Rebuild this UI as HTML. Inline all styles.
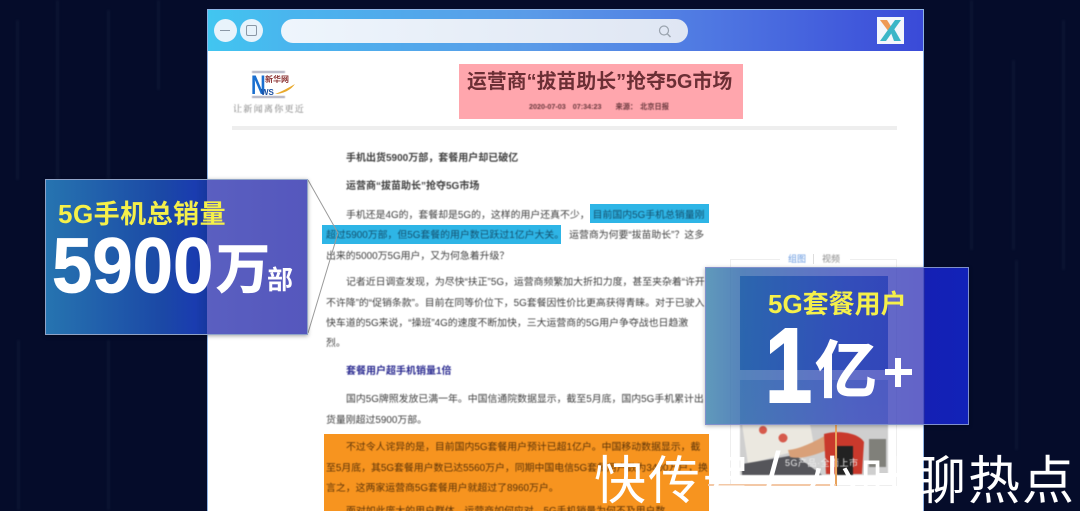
<!DOCTYPE html>
<html lang="zh"><head><meta charset="utf-8">
<style>
html,body{margin:0;padding:0;background:#050c2a}
#p{position:relative;width:1080px;height:511px;overflow:hidden;background:#050c2a;font-family:"Liberation Sans","Noto Sans CJK SC",sans-serif}
#p div{position:absolute}
.m{width:3px;background:rgba(120,140,170,.07);filter:blur(1.2px)}
.t{white-space:nowrap;font-size:9.9px;line-height:14px;color:#404040;filter:blur(.4px)}
.b{font-weight:700}
.h{font-size:10px}
.c{top:449px;font-size:52px;line-height:66px;color:#fff;white-space:nowrap;z-index:5;letter-spacing:2px}
.s{-webkit-text-stroke:.8px #fff}
</style></head><body><div id="p">
<div class="m" style="left:16px;top:20px;height:160px"></div>
<div class="m" style="left:56px;top:0;height:180px"></div>
<div class="m" style="left:107px;top:10px;height:170px"></div>
<div class="m" style="left:157px;top:0;height:90px"></div>
<div class="m" style="left:17px;top:340px;height:170px"></div>
<div class="m" style="left:107px;top:340px;height:170px"></div>
<div class="m" style="left:970px;top:0;height:250px"></div>
<div class="m" style="left:1012px;top:60px;height:190px"></div>
<div class="m" style="left:1062px;top:20px;height:250px"></div>
<div class="m" style="left:1015px;top:260px;height:190px"></div>

<div style="left:207px;top:9px;width:717px;height:502px;background:#fff;box-sizing:border-box;border:1px solid #8fb4e6;border-bottom:0"></div>
<div style="left:208px;top:10px;width:715px;height:41px;background:linear-gradient(90deg,#41c6f0 0%,#4ab4ee 12%,#5a9be8 45%,#4f78e2 70%,#3a4ad8 100%)"></div>
<div style="left:214px;top:19px;width:23px;height:23px;border-radius:50%;background:#e8f3fb"></div>
<div style="left:220px;top:30px;width:10px;height:1px;background:#8a97a5"></div>
<div style="left:240px;top:19px;width:23px;height:23px;border-radius:50%;background:#e8f3fb"></div>
<div style="left:246px;top:25px;width:9px;height:9px;border:1px solid #8a97a5;border-radius:2px"></div>
<div style="left:281px;top:19px;width:407px;height:24px;border-radius:12px;background:linear-gradient(90deg,#eef5fc,#dfe6f3)"></div>
<svg style="position:absolute;left:657px;top:24px" width="16" height="15" viewBox="0 0 16 15"><circle cx="7" cy="6.5" r="4.5" fill="none" stroke="#9aa3ae" stroke-width="1.2"/><path d="M10.5 10l3 3" stroke="#9aa3ae" stroke-width="1.4"/></svg>
<svg style="position:absolute;left:877px;top:17px" width="27" height="27" viewBox="0 0 27 27"><rect width="27" height="27" fill="#f4f6fb"/><path d="M3 3h7l5 8-3 4z" fill="#ee9a55"/><path d="M24 3h-6L3 24h6z" fill="#3bb6c8"/><path d="M13 13l3-3 8 14h-7z" fill="#3bb6c8"/></svg>

<!-- logo -->
<div style="left:252px;top:71px;width:33px;height:2px;background:#aab;filter:blur(.6px)"></div>
<div class="b" style="left:251px;top:73px;font-size:27px;line-height:24px;color:#1a6fd0;transform:scaleX(.75);transform-origin:0 0">N</div>
<div class="b" style="left:265px;top:74px;font-size:8px;line-height:12px;color:#8a3030;white-space:nowrap">新华网</div>
<div class="b" style="left:261px;top:88px;font-size:8px;line-height:9px;color:#1a4ea0">WS</div>
<svg style="position:absolute;left:274px;top:82px" width="22" height="14"><path d="M1 12C7 10 14 6 21 2 17 8 9 12 1 12z" fill="#e8a92c"/></svg>
<div style="left:252px;top:96px;width:33px;height:2px;background:#aab;filter:blur(.6px)"></div>
<div class="t" style="left:233px;top:102px;font-size:9px;letter-spacing:1.3px;color:#777;font-family:'Noto Serif CJK SC',serif">让新闻离你更近</div>

<div style="left:459px;top:64px;width:284px;height:55px;background:#ffa6ad"></div>
<div class="b" style="left:467px;top:69px;font-size:19.9px;line-height:26px;color:#6b2f35;white-space:nowrap;filter:blur(.35px)">运营商“拔苗助长”抢夺5G市场</div>
<div class="t b" style="left:529px;top:100px;font-size:7.2px;line-height:14px;color:#6b3a3f;word-spacing:5px">2020-07-03 07:34:23<span style="margin-left:14px">来源：</span><span style="margin-left:3px">北京日报</span></div>
<div style="left:232px;top:126px;width:665px;height:4px;background:#eeeeee"></div>

<div class="t b h" style="left:346px;top:150px;transform:translateY(2px)">手机出货5900万部，套餐用户却已破亿</div>
<div class="t b h" style="left:346px;top:180px">运营商“拔苗助长”抢夺5G市场</div>

<div style="left:590px;top:204px;width:119px;height:19px;background:#2eb5e6"></div>
<div style="left:322px;top:225px;width:239px;height:19px;background:#2eb5e6"></div>
<div class="t" style="left:346px;top:209px">手机还是4G的，套餐却是5G的，这样的用户还真不少，<span style="color:#14506e;margin-left:3px">目前国内5G手机总销量刚</span></div>
<div class="t" style="left:326px;top:229px"><span style="color:#14506e">超过5900万部，但5G套餐的用户数已跃过1亿户大关。</span><span style="margin-left:5px">运营商为何要“拔苗助长”？这多</span></div>
<div class="t" style="left:326px;top:250px">出来的5000万5G用户，又为何急着升级？</div>
<div class="t" style="left:346px;top:276px">记者近日调查发现，为尽快“扶正”5G，运营商频繁加大折扣力度，甚至夹杂着“许开</div>
<div class="t" style="left:326px;top:297px">不许降”的“促销条款”。目前在同等价位下，5G套餐因性价比更高获得青睐。对于已驶入</div>
<div class="t" style="left:326px;top:317px">快车道的5G来说，“操班”4G的速度不断加快，三大运营商的5G用户争夺战也日趋激</div>
<div class="t" style="left:326px;top:337px">烈。</div>
<div class="t b h" style="left:346px;top:365px;color:#2a2a90">套餐用户超手机销量1倍</div>
<div class="t" style="left:346px;top:393px">国内5G牌照发放已满一年。中国信通院数据显示，截至5月底，国内5G手机累计出</div>
<div class="t" style="left:326px;top:414px">货量刚超过5900万部。</div>

<div style="left:324px;top:434px;width:385px;height:77px;background:#f7941f"></div>
<div class="t" style="left:346px;top:441px;color:#5b3308">不过令人诧异的是，目前国内5G套餐用户预计已超1亿户。中国移动数据显示，截</div>
<div class="t" style="left:326px;top:462px;color:#5b3308">至5月底，其5G套餐用户数已达5560万户，同期中国电信5G套餐用户数为3400万户，换</div>
<div class="t" style="left:326px;top:482px;color:#5b3308">言之，这两家运营商5G套餐用户就超过了8960万户。</div>
<div class="t" style="left:346px;top:505px;color:#5b3308">面对如此庞大的用户群体，运营商如何应对，5G手机销量为何不及用户数</div>

<!-- side panel -->
<div style="left:730px;top:259px;width:167px;height:227px;box-sizing:border-box;border:1px solid #eee"></div>
<div style="left:780px;top:250px;width:70px;height:16px;background:#fff"></div>
<div class="t" style="left:788px;top:252px;font-size:9px;color:#6a9be0">组图</div>
<div style="left:813px;top:254px;width:1px;height:10px;background:#ddd"></div>
<div class="t" style="left:822px;top:252px;font-size:9px;color:#888">视频</div>
<div style="left:740px;top:276px;width:148px;height:94px;background:linear-gradient(135deg,#2a6ec0,#1f60c0)"></div>
<div style="left:740px;top:380px;width:148px;height:45px;background:linear-gradient(180deg,#9cc2e4 0%,#a8c6e0 100%)"></div>
<svg style="position:absolute;left:740px;top:424px;filter:blur(.6px)" width="148" height="51"><rect width="148" height="51" fill="#cfcfcf"/><path d="M2 0H70L74 22 8 40z" fill="#ebe8e0"/><path d="M2 40L55 31 82 51H2z" fill="#55555a"/><circle cx="23" cy="6" r="4" fill="#d65a4c"/><circle cx="43" cy="14" r="4.5" fill="#d65a4c"/><path d="M48 26C60 25 74 18 88 10L92 24C78 30 62 36 50 33z" fill="#d9a078"/><path d="M84 10C96 6 118 8 124 18L122 50H86z" fill="#c9392c"/><rect x="97" y="22" width="16" height="29" fill="#222"/><rect x="129" y="15" width="17" height="28" fill="#80807a"/></svg>
<div class="t" style="left:785px;top:456px;font-size:9px;letter-spacing:.5px;color:#eee">5G产品·全面上市</div>
<div style="left:835px;top:424px;width:2px;height:62px;background:#e8a35c"></div>
<div style="left:708px;top:484px;width:128px;height:2px;background:#f3c8a6"></div>

<!-- connector lines -->
<svg style="position:absolute;left:300px;top:178px;z-index:2" width="50" height="160"><path d="M8 2L38 55 8 155" fill="none" stroke="#9a9a9a" stroke-width="1"/></svg>

<!-- left card -->
<div style="left:45px;top:179px;width:263px;height:156px;box-sizing:border-box;border:1px solid #8fa3c8;background:linear-gradient(90deg,#2674b0 0%,#1b48a6 45%,#1a3cb0 57%,#16389f 61.6%,#5a5fc0 61.7%,#5557bd 100%);box-shadow:0 1px 4px rgba(0,0,0,.35);z-index:3"></div>
<div class="b" style="left:58px;top:196px;font-size:26px;line-height:36px;color:#f5f04a;white-space:nowrap;z-index:4;letter-spacing:.5px">5G手机总销量</div>
<div class="b s" style="left:52px;top:223px;font-size:78px;line-height:84px;color:#fff;white-space:nowrap;z-index:4;transform:scaleX(.93);transform-origin:0 0">5900</div>
<div class="b s" style="left:216px;top:239px;font-size:54px;line-height:62px;color:#fff;z-index:4">万</div>
<div class="b" style="left:267px;top:263px;font-size:26px;line-height:34px;color:#fff;z-index:4">部</div>

<!-- right card -->
<div style="left:705px;top:267px;width:264px;height:158px;box-sizing:border-box;border:1px solid #7f90cc;background:linear-gradient(90deg,rgba(56,128,170,.8) 0%,rgba(44,100,170,.8) 14%,rgba(55,70,185,.78) 55%,rgba(55,55,185,.78) 83.4%,#1420b4 83.5%,#1222b8 100%);box-shadow:0 1px 4px rgba(0,0,0,.3);z-index:3"></div>
<div class="b" style="left:768px;top:286px;font-size:26px;line-height:36px;color:#f5f04a;white-space:nowrap;z-index:4">5G套餐用户</div>
<div class="b s" style="left:765px;top:306px;font-size:106px;line-height:120px;color:#fff;z-index:4;transform:scaleX(.8);transform-origin:0 0;-webkit-text-stroke:2px #fff">1</div>
<div class="b s" style="left:815px;top:332px;font-size:62px;line-height:80px;color:#fff;z-index:4">亿</div>
<div style="left:885px;top:369px;width:27px;height:6px;background:#fff;z-index:4"></div>
<div style="left:895px;top:358px;width:6px;height:29px;background:#fff;z-index:4"></div>

<!-- caption -->
<div class="c" style="left:594px">快传号</div>
<div class="c" style="left:764px;font-size:60px;top:441px">/</div>
<div class="c" style="left:806px">小叶聊热点</div>
</div></body></html>
